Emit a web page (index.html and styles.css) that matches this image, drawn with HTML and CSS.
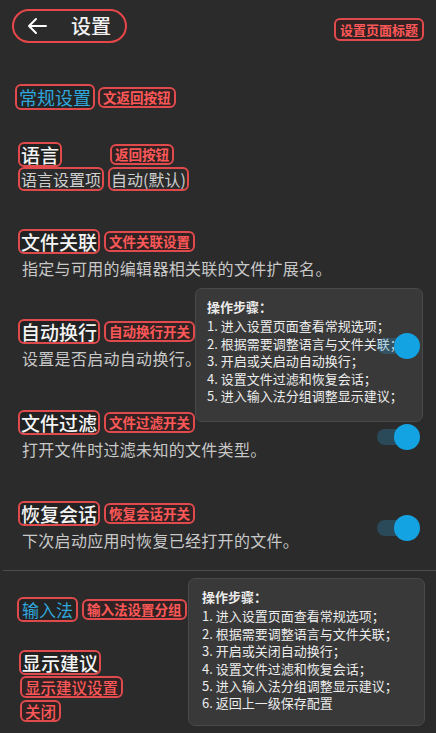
FILE: index.html
```html
<!DOCTYPE html>
<html lang="zh-CN">
<head>
<meta charset="utf-8">
<title>设置</title>
<link rel="stylesheet" href="styles.css">
</head>
<body>
<div class="screen">
  <header class="topbar">
    <div class="back-pill">
      <svg class="back-arrow" width="20" height="18" viewBox="0 0 20 18"><path d="M19 9H2M9 2L2 9l7 7" fill="none" stroke="#fff" stroke-width="2" stroke-linecap="round" stroke-linejoin="round"/></svg>
      <span class="page-title">设置</span>
    </div>
    <span class="badge badge-top">设置页面标题</span>
  </header>

  <main class="content">
    <div class="section-head general">
      <span class="section-name">常规设置</span>
      <span class="badge">文返回按钮</span>
    </div>

    <div class="item lang">
      <div class="line">
        <span class="item-title">语言</span>
        <span class="badge badge-lang">返回按钮</span>
      </div>
      <div class="line">
        <span class="plain-box">语言设置项</span>
        <span class="plain-box">自动(默认)</span>
      </div>
    </div>

    <div class="item assoc">
      <div class="line">
        <span class="item-title">文件关联</span>
        <span class="badge">文件关联设置</span>
      </div>
      <p class="desc">指定与可用的编辑器相关联的文件扩展名。</p>
    </div>

    <div class="item row wrap">
      <div class="texts">
        <div class="line">
          <span class="item-title">自动换行</span>
          <span class="badge">自动换行开关</span>
        </div>
        <p class="desc">设置是否启动自动换行。</p>
      </div>
      <span class="toggle on"><span class="knob"></span></span>
    </div>

    <div class="item row filter">
      <div class="texts">
        <div class="line">
          <span class="item-title">文件过滤</span>
          <span class="badge">文件过滤开关</span>
        </div>
        <p class="desc">打开文件时过滤未知的文件类型。</p>
      </div>
      <span class="toggle on"><span class="knob"></span></span>
    </div>

    <div class="item row restore">
      <div class="texts">
        <div class="line">
          <span class="item-title">恢复会话</span>
          <span class="badge">恢复会话开关</span>
        </div>
        <p class="desc">下次启动应用时恢复已经打开的文件。</p>
      </div>
      <span class="toggle on"><span class="knob"></span></span>
    </div>

    <hr class="divider">

    <div class="section-head ime">
      <span class="section-name small">输入法</span>
      <span class="badge">输入法设置分组</span>
    </div>

    <div class="item suggest">
      <span class="item-title">显示建议</span>
      <span class="badge badge-big">显示建议设置</span>
      <span class="badge badge-big">关闭</span>
    </div>
  </main>

  <div class="tip tip-one">
    <p class="tip-head">操作步骤：</p>
    <p>1. 进入设置页面查看常规选项；</p>
    <p>2. 根据需要调整语言与文件关联；</p>
    <p>3. 开启或关启动自动换行；</p>
    <p>4. 设置文件过滤和恢复会话；</p>
    <p>5. 进入输入法分组调整显示建议；</p>
  </div>

  <div class="tip tip-two">
    <p class="tip-head">操作步骤：</p>
    <p>1. 进入设置页面查看常规选项；</p>
    <p>2. 根据需要调整语言与文件关联；</p>
    <p>3. 开启或关闭自动换行；</p>
    <p>4. 设置文件过滤和恢复会话；</p>
    <p>5. 进入输入法分组调整显示建议；</p>
    <p>6. 返回上一级保存配置</p>
  </div>
</div>
</body>
</html>
```

FILE: styles.css
```css
* { box-sizing: border-box; }
html, body { margin: 0; padding: 0; }
body {
  background: #2b2b2b;
  font-family: "Noto Sans CJK SC", "Noto Sans", sans-serif;
  color: #e8e8e8;
}
.screen {
  position: relative;
  width: 436px;
  height: 733px;
  overflow: hidden;
  background: #2b2b2b;
}
.topbar {
  display: flex;
  justify-content: space-between;
  align-items: center;
  height: 43px;
  padding: 9px 12px 0 12px;
}
.back-pill {
  display: flex;
  align-items: center;
  height: 34px;
  padding: 0 14px 0 13px;
  border: 2px solid #e8474a;
  border-radius: 17px;
  gap: 24px;
}
.back-arrow { display: block; }
.page-title {
  font-size: 20px;
  line-height: 24px;
  font-weight: 500;
  color: #f2f2f2;
}
.badge {
  display: inline-block;
  border: 2px solid #e04a4c;
  border-radius: 6px;
  padding: 0 3px;
  font-size: 13.5px;
  line-height: 17px;
  font-weight: 700;
  color: #ff5858;
  background: rgba(60, 20, 20, 0.35);
  white-space: nowrap;
}
.badge-top { margin-top: 7px; font-size: 13px; padding: 1px 4px; }
.content {
  padding: 0 17px 0 18px;
}
.section-head {
  display: flex;
  align-items: center;
  gap: 3px;
}
.section-head.general { margin-top: 41px; margin-left: -3px; }
.section-name {
  display: inline-block;
  border: 2px solid #e04a4c;
  border-radius: 6px;
  padding: 0 2px;
  font-size: 18px;
  line-height: 22px;
  color: #2fa6dc;
  background: rgba(0, 0, 0, 0.15);
}
.section-name.small { font-size: 17px; line-height: 21px; padding: 0 3px; }
.item-title {
  display: inline-block;
  border: 2px solid #e04a4c;
  border-radius: 6px;
  padding: 0 1px;
  font-size: 19px;
  line-height: 21px;
  font-weight: 500;
  color: #f4f4f4;
  background: rgba(0, 0, 0, 0.2);
}
.plain-box {
  display: inline-block;
  border: 2px solid #e04a4c;
  border-radius: 6px;
  padding: 0 1px;
  font-size: 16px;
  line-height: 20px;
  color: #cfcfcf;
}
.line {
  display: flex;
  align-items: center;
  gap: 4px;
}
.item { display: block; }
.lang { margin-top: 32px; }
.badge-lang { margin-left: 44px; }
.desc {
  margin: 2px 0 0 4px;
  font-size: 16px;
  line-height: 24px;
  letter-spacing: 0.3px;
  color: #c8c8c8;
}
.assoc { margin-top: 38px; }
.row {
  display: flex;
  justify-content: space-between;
  align-items: center;
}
.wrap { margin-top: 39px; }
.filter { margin-top: 40px; }
.restore { margin-top: 40px; }
.toggle {
  position: relative;
  z-index: 5;
  display: block;
  width: 42px;
  height: 16px;
  border-radius: 8px;
  background: rgba(40, 150, 210, 0.28);
  margin-top: 2px;
}
.knob {
  position: absolute;
  right: -1px;
  top: -5px;
  width: 26px;
  height: 26px;
  border-radius: 50%;
  background: #14a3e2;
}
.divider {
  border: 0;
  border-top: 1px solid #4e4e4e;
  margin: 18px -17px 0 -15px;
  height: 0;
}
.section-head.ime { margin-top: 26px; margin-left: -1px; gap: 4px; }
.suggest {
  display: flex;
  flex-direction: column;
  align-items: flex-start;
  gap: 2px;
  margin-top: 28px;
  margin-left: 1px;
}
.badge-big {
  font-size: 15.5px;
  line-height: 18px;
  font-weight: 500;
  padding: 0 3px;
  margin-left: 1px;
}
.suggest .item-title { margin-bottom: -1px; }
.tip {
  position: absolute;
  z-index: 3;
  background: #393939;
  border: 1px solid #4a4a4a;
  border-radius: 7px;
  padding: 9px 10px 0 11px;
  color: #ececec;
  font-size: 13px;
  line-height: 17.4px;
}
.tip p { margin: 0; white-space: nowrap; }
.tip .tip-head { font-weight: 700; margin-bottom: 2px; }
.tip-one {
  left: 195px;
  top: 288px;
  width: 228px;
  height: 134px;
}
.tip-two {
  left: 188px;
  top: 578px;
  width: 237px;
  height: 148px;
  padding-left: 13px;
}
```
